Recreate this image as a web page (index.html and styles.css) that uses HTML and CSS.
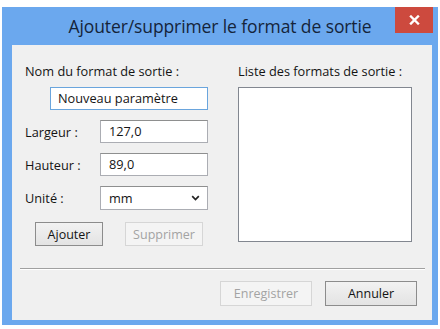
FILE: index.html
```html
<!DOCTYPE html>
<html lang="fr">
<head>
<meta charset="UTF-8">
<title>Ajouter/supprimer le format de sortie</title>
<link rel="stylesheet" href="styles.css">
</head>
<body>

<div class="window">
    <div class="titlebar">
        <span class="title">Ajouter/supprimer le format de sortie</span>
        <div class="close">
            <svg width="11" height="10" viewBox="0 0 11 10">
                <path d="M2 1.5 L9 8.5 M9 1.5 L2 8.5" stroke="#fff" stroke-width="2.4" stroke-linecap="square"/>
            </svg>
        </div>
    </div>

    <div class="client">
        <div class="columns">
            <!-- colonne gauche -->
            <div class="col-left">
                <div class="label">Nom du format de sortie :</div>
                <div class="field field-name focused">Nouveau paramètre</div>

                <div class="row">
                    <span class="row-label">Largeur :</span>
                    <div class="field">127,0</div>
                </div>
                <div class="row">
                    <span class="row-label">Hauteur :</span>
                    <div class="field">89,0</div>
                </div>
                <div class="row">
                    <span class="row-label">Unité :</span>
                    <div class="field combo">
                        <span>mm</span>
                        <svg width="9" height="6" viewBox="0 0 9 6">
                            <path d="M1.2 1.2 L4.5 4.5 L7.8 1.2" fill="none" stroke="#222" stroke-width="1.7"/>
                        </svg>
                    </div>
                </div>

                <div class="btn-row">
                    <button class="btn btn-add">Ajouter</button>
                    <button class="btn btn-del" disabled>Supprimer</button>
                </div>
            </div>

            <!-- colonne droite -->
            <div class="col-right">
                <div class="label">Liste des formats de sortie :</div>
                <div class="listbox"></div>
            </div>
        </div>

        <div class="separator"></div>

        <div class="footer">
            <button class="btn btn-wide" disabled>Enregistrer</button>
            <button class="btn btn-wide">Annuler</button>
        </div>
    </div>
</div>

</body>
</html>
```

FILE: styles.css
```css
body, html {
    margin: 0;
    padding: 0;
    background: #ffffff;
}

body {
    padding: 7px 0 0 2px;
    font-family: "Open Sans", "Noto Sans", sans-serif;
    color: #141414;
}

.window {
    width: 436px;
    height: 318px;
    box-sizing: border-box;
    background-color: #6ba8ee;
    padding: 0 6px 5px 10px;
    display: flex;
    flex-direction: column;
}

.titlebar {
    position: relative;
    height: 38px;
    display: flex;
    align-items: center;
    justify-content: center;
    margin-left: -10px;
    margin-right: -6px;
}

.title {
    font-size: 17.5px;
    color: #15243a;
    margin-top: -1px;
    letter-spacing: -0.1px;
}

/* bouton fermer, posé sur le cadre */
.close {
    position: absolute;
    top: 0;
    right: 5px;
    width: 38px;
    height: 26px;
    background-color: #cd4a3e;
    display: flex;
    align-items: center;
    justify-content: center;
}

.client {
    flex: 1;
    background-color: #f0f0f0;
    padding-top: 18px;
    font-size: 12.75px;
}

.columns {
    display: flex;
    padding-left: 13px;
    gap: 30px;
}

.col-left {
    width: 183px;
}

.col-right {
    width: 174px;
}

.label {
    height: 16px;
    line-height: 16px;
    white-space: nowrap;
}

.field {
    height: 23px;
    box-sizing: border-box;
    background-color: #ffffff;
    border: 1px solid #abadb3;
    border-top-color: #8e8f8f;
    padding-left: 8px;
    line-height: 21px;
    white-space: nowrap;
}

.field-name {
    margin-top: 8px;
    margin-left: 25px;
    width: 158px;
    padding-left: 7px;
}

.focused {
    border-color: #6aa5dd;
}

.row {
    display: flex;
    align-items: center;
    margin-top: 10px;
}

.row-label {
    width: 75px;
}

.row .field {
    width: 108px;
}

.combo {
    display: flex;
    align-items: center;
    justify-content: space-between;
    padding-right: 7px;
    height: 24px;
}

.btn-row {
    display: flex;
    gap: 22px;
    margin-top: 12px;
    padding-left: 10px;
}

.btn {
    height: 24px;
    box-sizing: border-box;
    font-family: inherit;
    font-size: 12.5px;
    color: #141414;
    background: linear-gradient(#f2f2f2, #e3e3e3);
    border: 1px solid #8c8c8c;
    padding: 0;
}

.btn:disabled {
    color: #a3a3a3;
    background: #f4f4f4;
    border-color: #d6d6d6;
}

.btn-add {
    width: 68px;
}

.btn-del {
    width: 78px;
}

.listbox {
    margin-top: 8px;
    height: 155px;
    background-color: #ffffff;
    border: 1px solid #828790;
    box-sizing: border-box;
}

.separator {
    margin: 22px 7px 0 8px;
    height: 1px;
    background-color: #a0a0a0;
    border-bottom: 1px solid #ffffff;
}

.footer {
    display: flex;
    justify-content: flex-end;
    gap: 13px;
    margin-top: 11px;
    padding-right: 15px;
}

.btn-wide {
    width: 92px;
    height: 25px;
}
```
